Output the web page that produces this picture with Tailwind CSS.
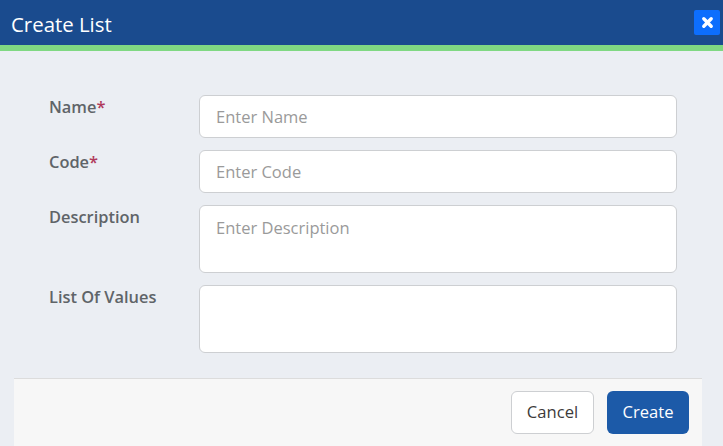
<!DOCTYPE html>
<html lang="en">
<head>
    <meta charset="UTF-8">
    <meta name="viewport" content="width=device-width, initial-scale=1.0">
    <title>Create List</title>
    <script src="https://cdn.jsdelivr.net/npm/@tailwindcss/browser@4"></script>
</head>
<body class="bg-[#ebeef3] font-['Open_Sans',sans-serif]">
    <div class="flex flex-col w-[723px] h-[446px] overflow-hidden">
        <header class="flex flex-row justify-between items-start h-[51px] shrink-0 bg-[#1a4b8e] border-b-[6px] border-[#7fd882] text-white pl-[11px] pr-[3px] pt-[10px]">
            <h1 class="text-[20.4px] leading-[28px]">Create List</h1>
            <button class="flex justify-center items-center w-[26px] h-[25px] bg-[#0d6efd] rounded-[2px]">
                <svg width="13" height="13" viewBox="0 0 13 13"><path d="M2.8 2.8L10.2 10.2M10.2 2.8L2.8 10.2" stroke="#fff" stroke-width="3.4" stroke-linecap="round"/></svg>
            </button>
        </header>

        <form class="flex flex-col gap-[12px] pl-[49px] pr-[46px] pt-[44px] h-[327px] shrink-0">
            <div class="flex flex-row">
                <label class="w-[150px] text-[16.4px] leading-[24px] font-semibold text-[#5f6468]">Name<span class="text-[#b03a5b]">*</span></label>
                <input type="text" placeholder="Enter Name" class="w-[478px] h-[43px] px-4 bg-white border border-[#cdcfd2] rounded-[6px] text-[16.5px] placeholder:text-[#9a9a9a]" />
            </div>
            <div class="flex flex-row">
                <label class="w-[150px] text-[16.4px] leading-[24px] font-semibold text-[#5f6468]">Code<span class="text-[#b03a5b]">*</span></label>
                <input type="text" placeholder="Enter Code" class="w-[478px] h-[43px] px-4 bg-white border border-[#cdcfd2] rounded-[6px] text-[16.5px] placeholder:text-[#9a9a9a]" />
            </div>
            <div class="flex flex-row">
                <label class="w-[150px] text-[16.4px] leading-[24px] font-semibold text-[#5f6468]">Description</label>
                <textarea placeholder="Enter Description" class="w-[478px] h-[68px] px-4 py-[10px] bg-white border border-[#cdcfd2] rounded-[6px] text-[16.5px] leading-[24px] resize-none placeholder:text-[#9a9a9a]"></textarea>
            </div>
            <div class="flex flex-row">
                <label class="w-[150px] text-[16.4px] leading-[24px] font-semibold text-[#5f6468]">List Of Values</label>
                <textarea class="w-[478px] h-[68px] px-4 py-[10px] bg-white border border-[#cdcfd2] rounded-[6px] resize-none"></textarea>
            </div>
        </form>

        <footer class="flex flex-row justify-end items-start gap-[13px] ml-[14px] w-[688px] h-[68px] shrink-0 bg-[#f7f7f7] border-t border-[#dcdcdc] pt-[12px] pr-[13px]">
            <button class="w-[83px] h-[43px] bg-white border border-[#cdcfd2] rounded-[6px] text-[16.6px] text-[#3d3a3a]">Cancel</button>
            <button class="w-[82px] h-[43px] bg-[#1c5aa8] rounded-[6px] text-[16.6px] text-white">Create</button>
        </footer>
    </div>
</body>
</html>
